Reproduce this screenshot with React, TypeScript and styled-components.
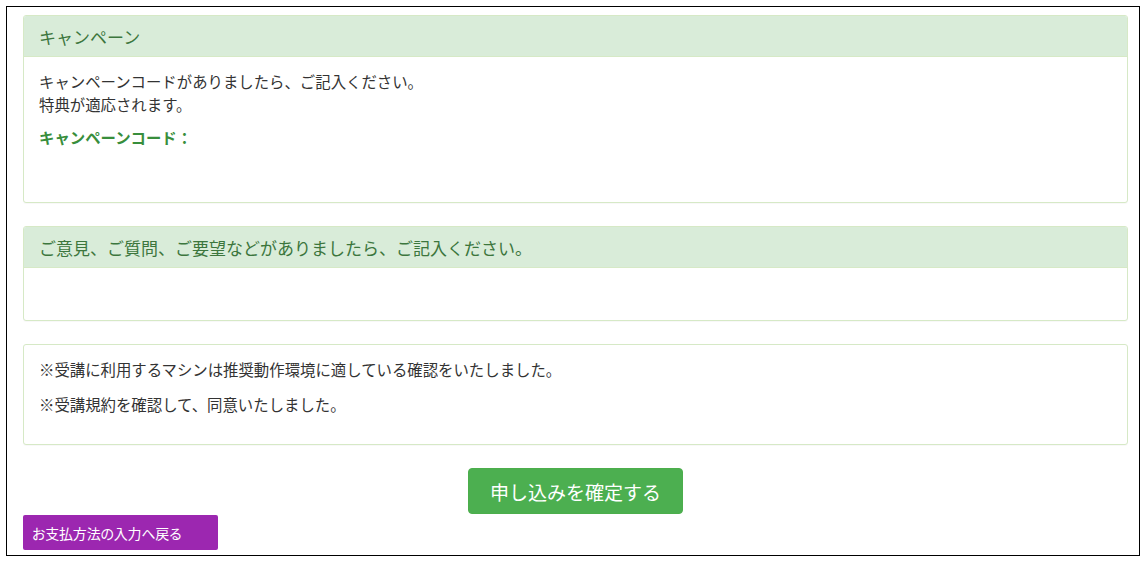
import React from 'react';
import styled, { createGlobalStyle } from 'styled-components';

const GlobalStyle = createGlobalStyle`
	html, body {
		margin: 0;
		padding: 0;
		background: #fff;
	}
	body {
		font-family: 'Noto Sans CJK JP', 'Noto Sans', sans-serif;
		color: #333;
	}
`;

const Frame = styled.div`
	margin: 6px 0 0 6px;
	width: 1134px;
	height: 550px;
	box-sizing: border-box;
	border: 1px solid #000;
	padding: 8px 11px 0 16px;
	display: flex;
	flex-direction: column;
`;

const Panel = styled.section`
	border: 1px solid #d6e9c6;
	border-radius: 3px;
	background: #fff;
	margin-bottom: 23px;
	box-sizing: border-box;
	box-shadow: 0 1px 1px rgba(0, 0, 0, 0.03);
`;

const PanelHeading = styled.div`
	height: 41px;
	box-sizing: border-box;
	padding: 0 15px;
	display: flex;
	align-items: center;
	background: #d9ecd9;
	border-bottom: 1px solid #d6e9c6;
	color: #3c763d;
	font-size: 17px;
	border-radius: 2px 2px 0 0;
`;

const PanelBody = styled.div<{ $height: number }>`
	height: ${({ $height }) => $height}px;
	box-sizing: border-box;
	padding: 13px 15px 0;
	font-size: 15.4px;
	line-height: 23px;
`;

const Para = styled.p<{ $mb?: number }>`
	margin: 0 0 ${({ $mb }) => $mb ?? 12}px;
	white-space: nowrap;
`;

const Label = styled.div`
	font-weight: bold;
	color: #388e3c;
	font-size: 15.4px;
	line-height: 22px;
`;

const ConfirmRow = styled.div`
	display: flex;
	justify-content: center;
`;

const ConfirmButton = styled.button`
	width: 215px;
	height: 46px;
	border: 1px solid #4cae4c;
	border-radius: 4px;
	background: #4caf50;
	color: #fff;
	font-family: inherit;
	font-size: 19px;
	cursor: pointer;
`;

const BackRow = styled.div`
	display: flex;
	margin-top: 1px;
`;

const BackButton = styled.button`
	width: 195px;
	height: 35px;
	border: none;
	border-radius: 2px;
	padding: 0 0 0 9px;
	text-align: left;
	background: #9c27b0;
	color: #fff;
	font-family: inherit;
	font-size: 14px;
	font-feature-settings: 'palt';
	letter-spacing: -0.2px;
	cursor: pointer;
`;

const App = () => (
	<>
		<GlobalStyle />
		<Frame>
			<Panel>
				<PanelHeading>キャンペーン</PanelHeading>
				<PanelBody $height={145}>
					<Para $mb={10}>
						キャンペーンコードがありましたら、ご記入ください。
						<br />
						特典が適応されます。
					</Para>
					<Label>キャンペーンコード：</Label>
				</PanelBody>
			</Panel>
			<Panel>
				<PanelHeading>ご意見、ご質問、ご要望などがありましたら、ご記入ください。</PanelHeading>
				<PanelBody $height={52} />
			</Panel>
			<Panel>
				<PanelBody $height={99}>
					<Para>※受講に利用するマシンは推奨動作環境に適している確認をいたしました。</Para>
					<Para>※受講規約を確認して、同意いたしました。</Para>
				</PanelBody>
			</Panel>
			<ConfirmRow>
				<ConfirmButton>申し込みを確定する</ConfirmButton>
			</ConfirmRow>
			<BackRow>
				<BackButton>お支払方法の入力へ戻る</BackButton>
			</BackRow>
		</Frame>
	</>
);

export default App;
